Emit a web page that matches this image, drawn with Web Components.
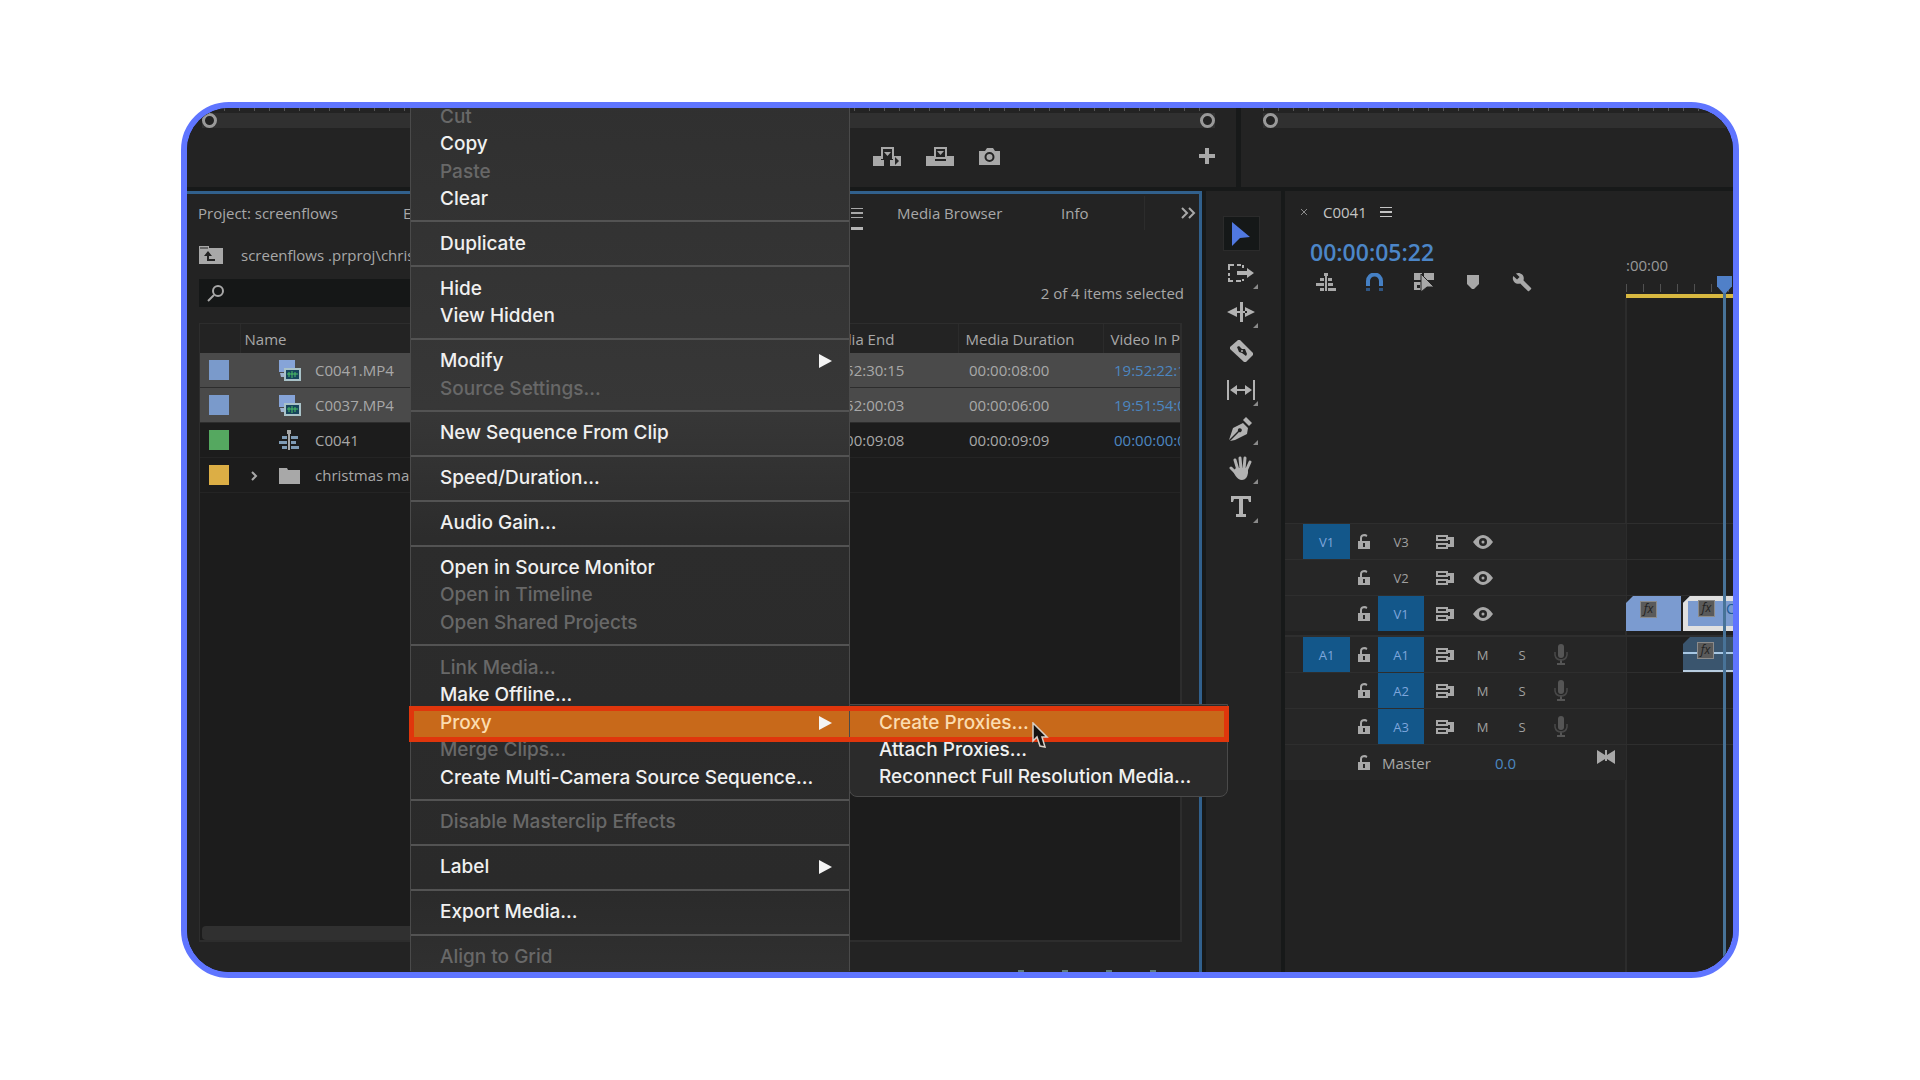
<!DOCTYPE html>
<html lang="en">
    <head>
        <meta charset="utf-8">
        <meta name="viewport" content="width=device-width, initial-scale=1.0">
        <title>Create proxies</title>
        <style>
            body {
                margin: 0;
                background: #fff;
                font: 15px/20px "Open Sans", "Noto Sans", sans-serif;
                color: #a8a8a8;
            }
        </style>
    </head>
    <body>
        <template id="frame_template">
            <style>
                :host {
                    display: block;
                    box-sizing: border-box;
                    height: 100vh;
                    min-height: 700px;
                    padding: 102px 181px;
                }
                .frame {
                    position: relative;
                    box-sizing: border-box;
                    height: 100%;
                    display: grid;
                    grid-template-rows: 79px minmax(0, 1fr);
                    gap: 4px;
                    border: 6px solid #5f75ff;
                    border-radius: 48px;
                    overflow: hidden;
                    background: #171919;
                }
                .monitors {
                    display: grid;
                    grid-template-columns: minmax(0, 1fr) 492px;
                    gap: 5px;
                }
                .panels {
                    display: grid;
                    grid-template-columns: minmax(0, 1fr) 75px 448px;
                    gap: 4px;
                }
            </style>
            <div class="frame">
                <div class="monitors"><slot name="monitors"></slot></div>
                <div class="panels"><slot name="panels"></slot></div>
                <slot></slot>
            </div>
        </template>

        <template id="monitor_template">
            <style>
                :host {
                    display: block;
                    background: #232323;
                    overflow: hidden;
                }
                .ticks {
                    height: 3px;
                    margin: 0 22px;
                    background: repeating-linear-gradient(to right, #555 0 1px, transparent 1px 15px);
                }
                .zoom {
                    display: flex;
                    justify-content: space-between;
                    align-items: center;
                    height: 15px;
                    margin: 2px 21px 0 15px;
                    background: #303030;
                }
                .zoom i {
                    box-sizing: border-box;
                    width: 15px;
                    height: 15px;
                    border: 3px solid #999;
                    border-radius: 50%;
                    background: #232323;
                }
                :host([open-end]) .zoom { margin: 2px 0 0 22px; }
                :host([open-end]) .zoom i:last-child { visibility: hidden; }
                .buttons {
                    display: flex;
                    justify-content: flex-end;
                    align-items: center;
                    gap: 25px;
                    height: 40px;
                    margin: 8px 21px 0 0;
                }
                ::slotted(:last-child) { margin-left: 174px; }
            </style>
            <div class="ticks"></div>
            <div class="zoom"><i></i><i></i></div>
            <div class="buttons"><slot></slot></div>
        </template>

        <template id="project_template">
            <style>
                :host {
                    display: flex;
                    flex-direction: column;
                    min-height: 0;
                    border: solid #31608c;
                    border-width: 3px 3px 0 0;
                    background: #232323;
                    white-space: nowrap;
                }
                .tabs {
                    display: grid;
                    grid-template-columns: 205px 448px 46px 164px 83px 1fr;
                    align-items: center;
                    height: 37px;
                    padding-left: 11px;
                }
                .tabs a { color: inherit; text-decoration: none; }
                .tabs .active {
                    justify-self: start;
                    padding: 11px 0 8px;
                    border-bottom: 3px solid #b5b5b5;
                    line-height: 0;
                }
                .tabs .more {
                    border-left: 1px solid #2c2c2c;
                    height: 34px;
                    display: flex;
                    align-items: center;
                    padding: 0 0 0 36px;
                }
                .path {
                    display: flex;
                    align-items: center;
                    gap: 18px;
                    height: 48px;
                    padding-left: 12px;
                }
                .find {
                    display: flex;
                    align-items: center;
                    justify-content: space-between;
                    padding: 0 15px 0 12px;
                }
                .search {
                    display: flex;
                    align-items: center;
                    width: 520px;
                    height: 28px;
                    background: #151717;
                    padding-left: 8px;
                    box-sizing: border-box;
                }
                .search input {
                    flex: 1;
                    border: 0;
                    outline: 0;
                    background: none;
                    font: inherit;
                    color: inherit;
                }
                .list {
                    flex: 1;
                    min-height: 0;
                    display: flex;
                    flex-direction: column;
                    margin: 16px 17px 0 12px;
                    border: 1px solid #2d2d2d;
                    border-width: 1px 2px 2px 1px;
                    background: #1c1c1c;
                    overflow: hidden;
                }
                .bar {
                    width: 600px;
                    height: 14px;
                    margin: auto 0 0 2px;
                    border-radius: 4px;
                    background: #303030;
                }
                .foot {
                    display: flex;
                    justify-content: flex-end;
                    gap: 28px;
                    height: 2px;
                    padding: 28px 38px 0 0;
                    overflow: hidden;
                }
            </style>
            <nav class="tabs">
                <a href="#project">Project: screenflows</a>
                <a href="#effects">Effects</a>
                <a href="#menu" class="active" aria-label="Panel menu"><ui-icon name="lines"></ui-icon></a>
                <a href="#browser">Media Browser</a>
                <a href="#info">Info</a>
                <div class="more"><ui-icon name="more"></ui-icon></div>
            </nav>
            <div class="path"><ui-icon name="folderup"></ui-icon><span>screenflows .prproj\chris</span></div>
            <div class="find">
                <label class="search"><ui-icon name="search"></ui-icon><input type="text" aria-label="Search"></label>
                <span>2 of 4 items selected</span>
            </div>
            <div class="list">
                <slot></slot>
                <div class="bar"></div>
            </div>
            <div class="foot">
                <ui-icon name="foot"></ui-icon>
                <ui-icon name="foot"></ui-icon>
                <ui-icon name="foot"></ui-icon>
                <ui-icon name="foot"></ui-icon>
            </div>
        </template>

        <template id="clips_template">
            <style>
                :host { display: block; }
                table {
                    width: 100%;
                    table-layout: fixed;
                    border-collapse: collapse;
                }
                th {
                    height: 29px;
                    padding: 0 0 0 7px;
                    background: #232323;
                    border-left: 1px solid #2b2b2b;
                    text-align: left;
                    font-weight: 400;
                }
                th:first-child { border: 0; }
                th:nth-child(2) { padding-left: 4px; }
                td {
                    height: 34px;
                    padding: 0 0 0 11px;
                    border-bottom: 1px solid #242424;
                }
                th, td { overflow: hidden; white-space: nowrap; }
                td:first-child { padding-left: 9px; }
                tr.on td { background: #4a4a4a; border-color: #2d2d2d; }
                .swatch { width: 20px; height: 20px; }
                .name {
                    display: grid;
                    grid-template-columns: 28px 22px 1fr;
                    align-items: center;
                }
                .name span { padding-left: 14px; }
                .in { color: #4c86c0; }
            </style>
            <table>
                <colgroup><col style="width: 40px"><col><col style="width: 145px"><col style="width: 145px"><col style="width: 77px"></colgroup>
                <thead>
                    <tr><th></th><th>Name</th><th>Media End</th><th>Media Duration</th><th>Video In Point</th></tr>
                </thead>
                <tbody></tbody>
            </table>
        </template>

        <template id="tools_template">
            <style>
                :host {
                    display: flex;
                    flex-direction: column;
                    align-items: center;
                    padding-top: 23px;
                    background: #232323;
                }
                button {
                    position: relative;
                    display: grid;
                    place-items: center;
                    width: 37px;
                    height: 35px;
                    margin: 2px 5px 2px 0;
                    padding: 0;
                    border: 1px solid transparent;
                    background: none;
                    color: #b2b2b2;
                }
                button.on { background: #151818; border-color: #2b2b2b; color: #5078e0; }
                button.sub::after {
                    content: "";
                    position: absolute;
                    right: 1px;
                    bottom: 0;
                    border: solid transparent;
                    border-width: 5px 0 0 5px;
                    border-right: 5px solid #8a8a8a;
                    width: 0;
                    height: 0;
                    border-left: 0;
                }
            </style>
        </template>

        <template id="timeline_template">
            <style>
                :host {
                    position: relative;
                    display: flex;
                    flex-direction: column;
                    background: #222;
                    overflow: hidden;
                }
                .tab {
                    display: flex;
                    align-items: center;
                    height: 42px;
                    padding-left: 15px;
                    color: #c4c4c4;
                }
                .tab span { margin: 0 13px 0 15px; }
                .head {
                    display: grid;
                    grid-template-columns: 341px 1fr;
                    height: 65px;
                }
                .time {
                    height: 38px;
                    padding-left: 25px;
                    font: 600 23px/38px "Open Sans", sans-serif;
                    color: #4c86c8;
                }
                .keys {
                    display: grid;
                    grid-template-columns: repeat(5, 49px);
                    justify-items: center;
                    align-items: center;
                    height: 22px;
                    padding-left: 16px;
                }
                .ruler {
                    display: flex;
                    flex-direction: column;
                    justify-content: flex-end;
                    height: 65px;
                    color: #999;
                }
                .ruler i {
                    height: 8px;
                    margin: 9px 0 2px;
                    background: repeating-linear-gradient(to right, #505050 0 1px, transparent 1px 17px);
                }
                .ruler b { height: 4px; background: #d8b840; }
                .lanes {
                    flex: 1;
                    display: flex;
                    flex-direction: column;
                    padding-top: 225px;
                    background: linear-gradient(to right, transparent 340px, #2c2c2c 340px 342px, #202020 342px);
                }
                .gap { height: 4px; border-bottom: 1px solid #2e2e2e; }
                .playhead {
                    position: absolute;
                    top: 85px;
                    left: 432px;
                    bottom: 0;
                    width: 15px;
                    background: linear-gradient(#487398, #487398) center / 3px 100% no-repeat;
                }
                .playhead::before {
                    content: "";
                    display: block;
                    height: 17px;
                    background: #5080c8;
                    clip-path: polygon(0 0, 100% 0, 100% 60%, 60% 100%, 40% 100%, 0 60%);
                }
            </style>
            <div class="tab"><ui-icon name="close"></ui-icon><span>C0041</span><ui-icon name="lines"></ui-icon></div>
            <div class="head">
                <div>
                    <div class="time">00:00:05:22</div>
                    <div class="keys">
                        <ui-icon name="nest"></ui-icon>
                        <ui-icon name="magnet"></ui-icon>
                        <ui-icon name="linked"></ui-icon>
                        <ui-icon name="marker"></ui-icon>
                        <ui-icon name="wrench"></ui-icon>
                    </div>
                </div>
                <div class="ruler">:00:00<i></i><b></b></div>
            </div>
            <div class="lanes">
                <slot name="video"></slot>
                <div class="gap"></div>
                <slot name="audio"></slot>
            </div>
            <div class="playhead"></div>
        </template>

        <template id="track_template">
            <style>
                :host {
                    display: grid;
                    grid-template-columns: 341px minmax(0, 1fr);
                    height: 36px;
                    box-sizing: border-box;
                    border-top: 1px solid #2e2e2e;
                    font-size: 13px;
                }
                .head {
                    display: grid;
                    grid-template-columns: 47px 28px 46px 41px 35px 44px 34px;
                    align-items: center;
                    justify-items: center;
                    padding-left: 18px;
                    background: #262626;
                }
                :host([kind="master"]) .head {
                    grid-template-columns: 47px 28px 117px 102px 18px;
                    justify-items: start;
                    font-size: 15px;
                }
                :host([kind="master"]) ui-icon[name="lock"] { justify-self: center; }
                ui-icon[name="bowtie"] { align-self: start; padding-top: 5px; }
                .head span { padding-left: 4px; }
                .head output { color: #4c86c0; }
                button {
                    width: 100%;
                    height: 35px;
                    padding: 0;
                    border: 0;
                    background: none;
                    font: inherit;
                    color: #a0a0a0;
                }
                button.on { background: #13578a; color: #7ea6dc; }
                .lane { display: flex; gap: 2px; overflow: hidden; }
            </style>
            <div class="head"></div>
            <div class="lane"><slot></slot></div>
        </template>

        <template id="clip_template">
            <style>
                :host {
                    flex: 0 0 auto;
                    width: 55px;
                    height: 35px;
                    box-sizing: border-box;
                    display: flex;
                    align-items: flex-start;
                    gap: 12px;
                    padding: 6px 0 0 15px;
                    background: #7b9bd0;
                    color: #1f5b96;
                    font-size: 14px;
                    line-height: 16px;
                    clip-path: polygon(7px 0, 100% 0, 100% 100%, 0 100%, 0 7px);
                }
                :host([selected]) {
                    width: 110px;
                    border: 5px solid #e0e0e0;
                    padding: 0 0 0 11px;
                }
                :host([audio]) {
                    width: 110px;
                    margin-left: 57px;
                    padding: 6px 0 0 15px;
                    border-bottom: 2px solid #b8cde0;
                    background: linear-gradient(#a8c8e4, #a8c8e4) 0 15px / 100% 2px no-repeat, #3a556e;
                }
                i {
                    width: 15px;
                    height: 15px;
                    background: #5a5a5a;
                    color: #222;
                    font: italic 12px/14px "Open Sans", sans-serif;
                    text-align: center;
                    outline: 1px solid #8b8b8b;
                }
            </style>
            <i>fx</i><slot></slot>
        </template>

        <template id="menu_template">
            <style>
                :host {
                    position: absolute;
                    top: -5px;
                    bottom: 1px;
                    left: 223px;
                    z-index: 1;
                    box-sizing: border-box;
                    display: flex;
                    flex-direction: column;
                    width: 440px;
                    border: 1px solid #4a4a4a;
                    border-width: 0 1px;
                    background: linear-gradient(#303030, #373737 35%, #2c2c2c 50%, #2a2a2a 90%, #303030);
                    box-shadow: 0 1px #303030;
                }
                :host([slot="submenu"]) {
                    top: -5px;
                    bottom: auto;
                    left: 100%;
                    width: 379px;
                    padding: 5px 0;
                    border-width: 1px;
                    border-radius: 0 0 8px 8px;
                    background: #2b2b2b;
                    box-shadow: none;
                }
            </style>
            <slot></slot>
        </template>

        <template id="item_template">
            <style>
                :host {
                    position: relative;
                    flex: 1 0 27px;
                    display: flex;
                }
                button {
                    flex: 1;
                    display: flex;
                    align-items: center;
                    justify-content: space-between;
                    padding: 0 17px 0 29px;
                    border: 0;
                    background: none;
                    font: 500 19px/24px Inter, "Liberation Sans", sans-serif;
                    color: #f0f0f0;
                    white-space: nowrap;
                }
                button:disabled { color: #686868; }
                :host([active]) button {
                    background: #c8691a;
                    box-shadow: 0 2px #c8691a;
                    color: #fbdcb0;
                }
                .outline { display: none; }
                /* the red outline runs from the parent item over the open submenu */
                :host([open]) .outline {
                    display: block;
                    position: absolute;
                    z-index: 2;
                    top: -3px;
                    left: -2px;
                    box-sizing: border-box;
                    width: calc(100% + 382px);
                    height: 36px;
                    border: 5px solid #e0360c;
                    pointer-events: none;
                }
            </style>
            <button type="button"><slot></slot></button>
            <slot name="submenu"></slot>
            <div class="outline"></div>
        </template>

        <template id="separator_template">
            <style>
                :host {
                    flex: 1 0 17px;
                    display: flex;
                    align-items: center;
                }
                hr { flex: 1; height: 2px; margin: 0; border: 0; background: #535353; }
            </style>
            <hr>
        </template>

        <template id="pointer_template">
            <style>
                :host {
                    position: absolute;
                    top: 614px;
                    left: 845px;
                    z-index: 3;
                    line-height: 0;
                }
            </style>
            <ui-icon name="pointer"></ui-icon>
        </template>

        <app-frame>
            <preview-monitor slot="monitors">
                <ui-icon name="insert"></ui-icon>
                <ui-icon name="overwrite"></ui-icon>
                <ui-icon name="camera"></ui-icon>
                <ui-icon name="plus"></ui-icon>
            </preview-monitor>
            <preview-monitor slot="monitors" open-end></preview-monitor>

            <project-panel slot="panels"><clip-table></clip-table></project-panel>
            <tool-bar slot="panels"></tool-bar>
            <time-line slot="panels">
                <track-row slot="video" kind="video" patch="V1" target="V3"></track-row>
                <track-row slot="video" kind="video" target="V2"></track-row>
                <track-row slot="video" kind="video" target="V1" on>
                    <time-clip></time-clip>
                    <time-clip selected>C0041</time-clip>
                </track-row>
                <track-row slot="audio" kind="audio" patch="A1" target="A1" on><time-clip audio></time-clip></track-row>
                <track-row slot="audio" kind="audio" target="A2" on></track-row>
                <track-row slot="audio" kind="audio" target="A3" on></track-row>
                <track-row slot="audio" kind="master"></track-row>
            </time-line>

            <context-menu>
                <menu-item disabled>Cut</menu-item>
                <menu-item>Copy</menu-item>
                <menu-item disabled>Paste</menu-item>
                <menu-item>Clear</menu-item>
                <menu-line></menu-line>
                <menu-item>Duplicate</menu-item>
                <menu-line></menu-line>
                <menu-item>Hide</menu-item>
                <menu-item>View Hidden</menu-item>
                <menu-line></menu-line>
                <menu-item arrow>Modify</menu-item>
                <menu-item disabled>Source Settings...</menu-item>
                <menu-line></menu-line>
                <menu-item>New Sequence From Clip</menu-item>
                <menu-line></menu-line>
                <menu-item>Speed/Duration...</menu-item>
                <menu-line></menu-line>
                <menu-item>Audio Gain...</menu-item>
                <menu-line></menu-line>
                <menu-item>Open in Source Monitor</menu-item>
                <menu-item disabled>Open in Timeline</menu-item>
                <menu-item disabled>Open Shared Projects</menu-item>
                <menu-line></menu-line>
                <menu-item disabled>Link Media...</menu-item>
                <menu-item>Make Offline...</menu-item>
                <menu-item arrow active open>Proxy
                    <context-menu slot="submenu">
                        <menu-item active>Create Proxies...</menu-item>
                        <menu-item>Attach Proxies...</menu-item>
                        <menu-item>Reconnect Full Resolution Media...</menu-item>
                    </context-menu>
                </menu-item>
                <menu-item disabled>Merge Clips...</menu-item>
                <menu-item>Create Multi-Camera Source Sequence...</menu-item>
                <menu-line></menu-line>
                <menu-item disabled>Disable Masterclip Effects</menu-item>
                <menu-line></menu-line>
                <menu-item arrow>Label</menu-item>
                <menu-line></menu-line>
                <menu-item>Export Media...</menu-item>
                <menu-line></menu-line>
                <menu-item disabled>Align to Grid</menu-item>
            </context-menu>
            <mouse-pointer></mouse-pointer>
        </app-frame>

        <script>

            "use strict"

            // name: [width, height, svg content]
            const ICONS = {
                insert: [28, 19, '<path d="M0 9h8v4h3v6H0zM28 9h-8v4h-3v6h11z"/><path d="M9 12V1h11v11" fill="none" stroke="currentColor" stroke-width="2"/><path d="M11 5h7l-3.500 4z"/><path d="M22 10l4 4-4 4z" fill="#232323"/>'],
                overwrite: [28, 19, '<path d="M0 9h28v10H0z"/><path d="M9 10V1h11v9" fill="#232323" stroke="currentColor" stroke-width="2"/><path d="M11 4h7l-3.500 4z"/><path d="M9 12h11v2H9z" fill="#232323"/>'],
                camera: [21, 17, '<path d="M1 3h5l2-3h6l2 3h5v14H0V3z"/><circle cx="10.500" cy="9" r="4" fill="none" stroke="#232323" stroke-width="2"/>'],
                plus: [16, 16, '<path d="M6 0h4v6h6v4h-6v6H6v-6H0V6h6z"/>'],
                lines: [12, 12, '<path d="M0 1h12v1H0zM0 5h12v2H0zM0 10h12v1H0z"/>'],
                more: [15, 12, '<path d="M1 1l5 5-5 5M8 1l5 5-5 5" fill="none" stroke="currentColor" stroke-width="2"/>'],
                close: [8, 8, '<path d="M1 1l6 6M7 1L1 7" stroke="#8a8a8a"/>'],
                folderup: [24, 18, '<path d="M0 0h10v2h14v16H0z"/><path d="M1 2h8" stroke="#232323"/><path d="M5 10l4-5 4 5h-3v3h6v2H8v-5z" fill="#232323"/>'],
                search: [17, 17, '<circle cx="11" cy="6" r="5" fill="none" stroke="currentColor" stroke-width="2"/><path d="M7 10l-6 6" stroke="currentColor" stroke-width="2"/>'],
                foot: [16, 16, '<path d="M5 0h6v4H5z" fill="#5f7d7a"/>'],
                movie: [22, 22, '<path d="M0 1h16v12H0z" fill="#86a4d8"/><path d="M1 14h5v4H2z" fill="#9fb3cf"/><path d="M5 9h17v13H5z" fill="#a9c2c8"/><path d="M7 11h13v9H7z" fill="#17455c"/><path d="M8 15h11M10 13v5M13 12v7M16 13v5" stroke="#4cc065"/>'],
                sequence: [20, 20, '<path d="M3 6h5v3H3zM0 11h8v3H0zM3 16h5v3H3zM12 6h7v3h-7zM12 11h5v3h-5zM12 16h8v3h-8z" fill="#7f9bb5"/><path d="M9 0h2v20H9zM8 0h4v4H8z"/>'],
                folder: [21, 17, '<path d="M0 1h8l1 2h12v14H0z"/>'],
                chevron: [7, 10, '<path d="M1 1l4 4-4 4" fill="none" stroke="currentColor" stroke-width="2"/>'],
                select: [20, 24, '<path d="M1 0l18 15-10 1-8 8z"/>'],
                track: [26, 18, '<path d="M1 6V1h5M9 1h4M1 9v3M1 14v3h4M8 17h5M15 1v3M15 15v2" fill="none" stroke="currentColor" stroke-width="2"/><path d="M9 7h10V4l7 5-7 5v-3H9z"/>'],
                ripple: [28, 20, '<path d="M13 0h3v20h-3zM0 10l10-5v10zM28 10l-10-5v10zM8 9h12v2H8z"/>'],
                razor: [23, 22, '<path d="M8 0h2l13 13v2l-7 7h-2L0 9V7z"/><path d="M7 7l2-1 3 3h3l2 5-1 2-4-3-3-1z" fill="#232323"/><circle cx="12" cy="11" r="1"/>'],
                slip: [30, 20, '<path d="M1 0h2v20H1zM27 0h2v20h-2zM4 10l7-5v4h8V5l7 5-7 5v-4h-8v4z"/>'],
                pen: [24, 24, '<path d="M14 6l5 5-1 6-12 6-5 1 9-9a2 2 0 1 0-1-1L0 23 4 11z"/><path d="M14 3l3-3 6 6-3 3z"/>'],
                hand: [24, 24, '<path d="M9 14L6 4M12 13L11 2M15 13l1-11M17 15l4-9M8 18l-6-6" fill="none" stroke="currentColor" stroke-width="3" stroke-linecap="round"/><path d="M7 12h12v5q-1 7-6 7-4 0-7-5l-2-4z"/>'],
                type: [20, 21, '<path d="M0 0h20v6h-2l-1-3h-5v15h3v3H5v-3h3V3H3L2 6H0z"/>'],
                nest: [20, 18, '<path d="M4 5h4v3H4zM0 10h8v3H0zM4 15h4v3H4zM12 5h4v3h-4zM12 10h5v3h-5zM12 15h8v3h-8z"/><path d="M9 0h2v18H9zM8 0h4v3H8z"/>'],
                magnet: [17, 18, '<path d="M2 13V8a6 6 0 0 1 13 0v5" fill="none" stroke="#4580c4" stroke-width="4"/><path d="M0 15h4v3H0zM13 15h4v3h-4z" fill="#2f5582"/>'],
                linked: [20, 19, '<path d="M0 0h8v7H0zM10 0h10v7H10zM0 9h7v8H0z"/><path d="M3 12h3v3H3z" fill="#232323"/><path d="M7 1l13 13-7 0-6 5z" stroke="#232323"/>'],
                marker: [12, 14, '<path d="M0 0h12v9l-5 5H5L0 9z"/>'],
                wrench: [20, 20, '<path transform="scale(.84)" d="M22.700 19l-9.100-9.100c.9-2.300.4-5-1.500-6.900-2-2-5-2.400-7.400-1.300L9 6 6 9 1.600 4.700C.4 7.100.9 10.100 2.900 12.100c1.900 1.900 4.600 2.400 6.900 1.500l9.100 9.100c.4.4 1 .4 1.400 0l2.300-2.300c.5-.4.5-1.100.1-1.400z"/>'],
                lock: [12, 15, '<path d="M0 7h12v8H0z"/><path d="M3 8V4q0-3 4-3l2 1" fill="none" stroke="currentColor" stroke-width="2"/><path d="M5 9h2v4H5z" fill="#262626"/>'],
                sync: [18, 14, '<path d="M1 1h10v4H1zM1 9h10v4H1z" fill="none" stroke="currentColor" stroke-width="2"/><path d="M11 2h7v10h-7V9h3V5h-3z"/>'],
                eye: [20, 14, '<path d="M0 7q10-14 20 0-10 14-20 0z"/><circle cx="10" cy="7" r="4" fill="#262626"/><circle cx="10" cy="7" r="1.500"/>'],
                mic: [14, 21, '<g fill="#555"><rect x="4" y="0" width="6" height="14" rx="3"/><path d="M6 15h2v4H6zM3 19h8v2H3z"/></g><path d="M1 8v3q1 5 6 5t6-5V8" fill="none" stroke="#484848" stroke-width="1.500"/>'],
                bowtie: [18, 14, '<path d="M0 0l8 5V0h2v5l8-5v14l-8-5v2H8V9l-8 5z"/>'],
                arrow: [13, 14, '<path d="M0 0l13 7-13 7z" fill="#f4f4f4"/>'],
                pointer: [17, 28, '<path d="M1 1v18l4-4 3 9 5 1-3-10h5z" fill="#161210" stroke="#d8cfc6" stroke-width="1.500"/>']
            };

            const stamp = (element, id) => {
                const shadow_root = element.attachShadow({mode: 'open'});
                shadow_root.appendChild(document.getElementById(id).content.cloneNode(true));
                return shadow_root;
            };

            class uiIcon extends HTMLElement {
                connectedCallback() {
                    if (this.shadowRoot) return;
                    const [width, height, body] = ICONS[this.getAttribute("name")];
                    this.attachShadow({mode: 'open'}).innerHTML = `
                        <style>:host { display: inline-block; line-height: 0; flex: none; } svg { fill: currentColor; }</style>
                        <svg width="${width}" height="${height}" viewBox="0 0 ${width} ${height}" aria-hidden="true">${body}</svg>`;
                }
            }

            class clipTable extends HTMLElement {
                constructor() {
                    super();
                    const rows = [
                        ["#7a9acb", "movie", "C0041.MP4", "19:52:30:15", "00:00:08:00", "19:52:22:15"],
                        ["#7a9acb", "movie", "C0037.MP4", "19:52:00:03", "00:00:06:00", "19:51:54:03"],
                        ["#55a860", "sequence", "C0041", "00:00:09:08", "00:00:09:09", "00:00:00:00"],
                        ["#dcae45", "folder", "christmas market", "", "", ""]
                    ];
                    stamp(this, "clips_template").querySelector("tbody").innerHTML = rows.map(([color, icon, name, end, duration, start]) => `
                        <tr class="${icon === "movie" ? "on" : ""}">
                            <td><div class="swatch" style="background: ${color}"></div></td>
                            <td><div class="name">
                                <i>${icon === "folder" ? '<ui-icon name="chevron"></ui-icon>' : ""}</i>
                                <ui-icon name="${icon}"></ui-icon><span>${name}</span>
                            </div></td>
                            <td>${end}</td><td>${duration}</td><td class="in">${start}</td>
                        </tr>`).join("");
                }
            }

            class toolBar extends HTMLElement {
                constructor() {
                    super();
                    const shadow_root = stamp(this, "tools_template");
                    for (const name of ["select", "track", "ripple", "razor", "slip", "pen", "hand", "type"]) {
                        const button = document.createElement("button");
                        button.setAttribute("aria-label", name);
                        button.className = name === "select" ? "on" : name === "razor" ? "" : "sub";
                        button.innerHTML = `<ui-icon name="${name}"></ui-icon>`;
                        shadow_root.appendChild(button);
                    }
                }
            }

            class trackRow extends HTMLElement {
                connectedCallback() {
                    if (this.shadowRoot) return;
                    const kind = this.getAttribute("kind");
                    const patch = this.getAttribute("patch");
                    const target = this.getAttribute("target");
                    let html = patch ? `<button class="on">${patch}</button>` : "<i></i>";
                    html += '<ui-icon name="lock"></ui-icon>';
                    if (kind === "master") {
                        html += '<span>Master</span><output>0.0</output><ui-icon name="bowtie"></ui-icon>';
                    }
                    else {
                        html += `<button class="${this.hasAttribute("on") ? "on" : ""}">${target}</button><ui-icon name="sync"></ui-icon>`;
                        html += kind === "video"
                            ? '<ui-icon name="eye"></ui-icon>'
                            : '<button>M</button><button>S</button><ui-icon name="mic"></ui-icon>';
                    }
                    stamp(this, "track_template").querySelector(".head").innerHTML = html;
                }
            }

            class menuItem extends HTMLElement {
                connectedCallback() {
                    if (this.shadowRoot) return;
                    const button = stamp(this, "item_template").querySelector("button");
                    button.disabled = this.hasAttribute("disabled");
                    if (this.hasAttribute("arrow")) {
                        const arrow = document.createElement("ui-icon");
                        arrow.setAttribute("name", "arrow");
                        button.appendChild(arrow);
                    }
                }
            }

            // elements that only need their template
            const plain = {
                "app-frame": "frame_template",
                "preview-monitor": "monitor_template",
                "project-panel": "project_template",
                "time-line": "timeline_template",
                "time-clip": "clip_template",
                "context-menu": "menu_template",
                "menu-line": "separator_template",
                "mouse-pointer": "pointer_template"
            };

            window.customElements.define('ui-icon', uiIcon);
            window.customElements.define('clip-table', clipTable);
            window.customElements.define('tool-bar', toolBar);
            window.customElements.define('track-row', trackRow);
            window.customElements.define('menu-item', menuItem);

            for (const tag in plain) {
                window.customElements.define(tag, class extends HTMLElement {
                    constructor() {
                        super();
                        stamp(this, plain[tag]);
                    }
                });
            }

        </script>
    </body>
</html>
